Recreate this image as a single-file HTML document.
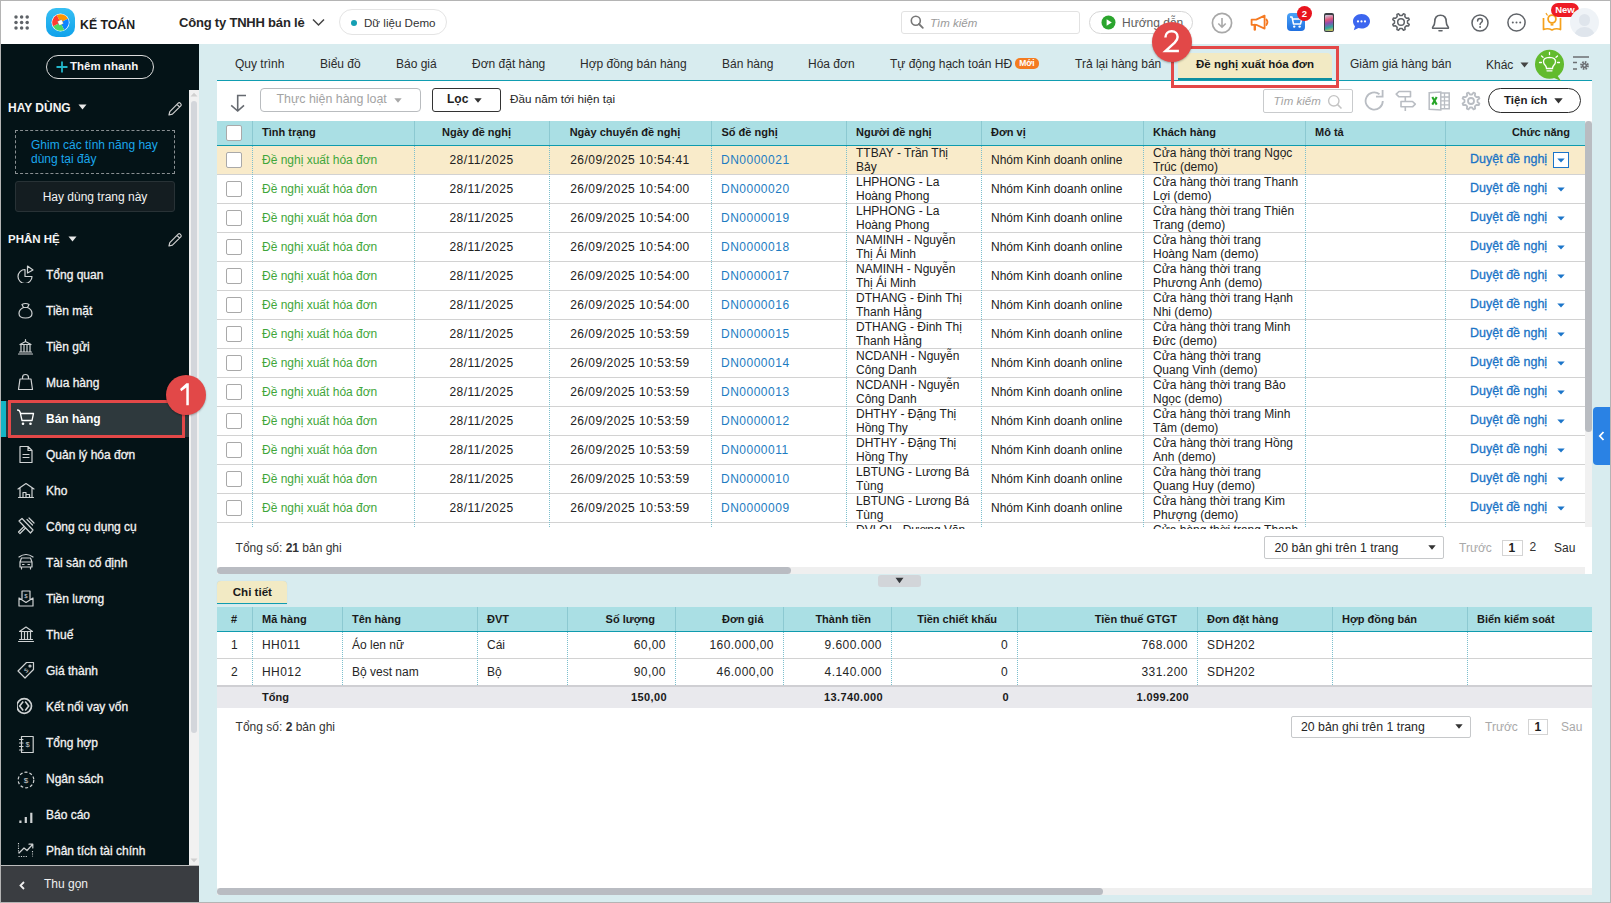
<!DOCTYPE html>
<html><head><meta charset="utf-8"><title>Kế toán</title>
<style>
*{box-sizing:border-box;margin:0;padding:0}
html,body{width:1611px;height:903px;overflow:hidden;background:#fff}
body{font-family:"Liberation Sans",sans-serif;font-size:12px;color:#212121;position:relative}
.abs{position:absolute}
#frame{position:absolute;left:0;top:0;width:1611px;height:903px;border-top:1px solid #b4b4b4;border-left:1px solid #b4b4b4;border-right:1px solid #b4b4b4;border-bottom:1px solid #b4b4b4;z-index:100;pointer-events:none}
/* header */
#hdr{position:absolute;left:0;top:0;width:1611px;height:44px;background:#fff}
/* sidebar */
#side{position:absolute;left:0;top:44px;width:199px;height:859px;background:#041317}
/* main */
#main{position:absolute;left:199px;top:44px;width:1412px;height:859px;background:#d8ecef}
.tab{position:absolute;top:12px;font-size:12px;color:#2a2a2a;white-space:nowrap}
#panel{position:absolute;left:217px;top:80px;width:1375px;height:494px;background:#fff;border-top:1px solid #119db1}
.mrow{position:absolute;left:0px;width:1368px;height:29px;border-bottom:1px solid #d2d2d2;background:#fff}
.mrow.hl{background:#f9ebca}
.mrow .c{position:absolute;top:0;height:28px;line-height:28px;white-space:nowrap}
.num{letter-spacing:0.5px}
.mrow .c2{position:absolute;top:-0.5px;line-height:14px;white-space:nowrap}
.cb{position:absolute;top:6px;width:16px;height:16px;border:1px solid #a9a9a9;border-radius:2px;background:#fff}
.st{color:#3fa63a}
.lnk{color:#1d7cc2}
.act{color:#1b74c6;font-weight:normal;font-size:12.5px;-webkit-text-stroke:0.3px #1b74c6;margin-top:-1px}
.tri{position:absolute;top:12px;width:8px;height:5px}
.vdot{position:absolute;z-index:5;width:1px;background-image:linear-gradient(#7dbfcd 50%,transparent 50%);background-size:1px 2px}
.th{position:absolute;top:0;height:24px;line-height:24px;font-weight:bold;color:#1a1a1a;white-space:nowrap}

.ddbox{position:absolute;left:1336px;top:6px;width:16px;height:16px;border:1.5px solid #1b75c9;background:#fff}
.tri{z-index:2}

</style></head><body>
<div id="hdr">
  <!-- grid dots -->
  <svg class="abs" style="left:14px;top:15px" width="16" height="15" viewBox="0 0 16 15">
    <g fill="#5f6368">
      <circle cx="2" cy="2" r="1.75"/><circle cx="7.6" cy="2" r="1.75"/><circle cx="13.2" cy="2" r="1.75"/>
      <circle cx="2" cy="7.5" r="1.75"/><circle cx="7.6" cy="7.5" r="1.75"/><circle cx="13.2" cy="7.5" r="1.75"/>
      <circle cx="2" cy="13" r="1.75"/><circle cx="7.6" cy="13" r="1.75"/><circle cx="13.2" cy="13" r="1.75"/>
    </g>
  </svg>
  <!-- logo -->
  <div class="abs" style="left:46px;top:8px;width:29px;height:29px;border-radius:10px;background:linear-gradient(#37bff3,#0fa2eb)"></div>
  <svg class="abs" style="left:51px;top:13px" width="19" height="19" viewBox="0 0 19 19">
    <circle cx="9.5" cy="9.5" r="9" fill="#fff"/>
    <g transform="rotate(-26.6 9.5 9.5)">
      <path d="M9.5 9.5 L9.5 1.2 A8.3 8.3 0 0 1 17.8 9.5 Z" fill="#ff9500"/>
      <path d="M9.5 9.5 L17.8 9.5 A8.3 8.3 0 0 1 9.5 17.8 Z" fill="#0a84ff"/>
      <path d="M9.5 9.5 L9.5 17.8 A8.3 8.3 0 0 1 1.2 9.5 Z" fill="#4cd964"/>
      <path d="M9.5 9.5 L1.2 9.5 A8.3 8.3 0 0 1 9.5 1.2 Z" fill="#ff3b30"/>
      <rect x="7.2" y="7.2" width="4.6" height="4.6" fill="#fff" stroke="#5f6368" stroke-width="0.3"/>
    </g>
  </svg>
  <div class="abs" style="left:80px;top:16.5px;font-size:12.3px;font-weight:bold;color:#1d1d1d;line-height:16px;white-space:nowrap">KẾ TOÁN</div>
  <div class="abs" style="left:179px;top:15px;font-size:13px;font-weight:bold;color:#262626;line-height:16px;white-space:nowrap;letter-spacing:-0.2px">Công ty TNHH bán lẻ</div>
  <svg class="abs" style="left:312px;top:18px" width="13" height="9" viewBox="0 0 13 9"><path d="M1 1.5 L6.5 7 L12 1.5" fill="none" stroke="#444" stroke-width="1.5"/></svg>
  <div class="abs" style="left:339px;top:9px;width:108px;height:26px;border:1px solid #e4e4e4;border-radius:13px"></div>
  <div class="abs" style="left:351px;top:20px;width:6px;height:6px;border-radius:3px;background:#159fb3"></div>
  <div class="abs" style="left:364px;top:15px;font-size:11.6px;color:#333;line-height:16px;white-space:nowrap">Dữ liệu Demo</div>
  <!-- search -->
  <div class="abs" style="left:901px;top:11px;width:179px;height:23px;border:1px solid #e2e2e2;border-radius:3px"></div>
  <svg class="abs" style="left:910px;top:15px" width="14" height="14" viewBox="0 0 14 14"><circle cx="5.8" cy="5.8" r="4.5" fill="none" stroke="#777" stroke-width="1.6"/><path d="M9 9 L12.8 12.8" stroke="#777" stroke-width="1.8" stroke-linecap="round"/></svg>
  <div class="abs" style="left:930px;top:15px;font-size:11.5px;font-style:italic;color:#9a9a9a;line-height:16px;white-space:nowrap">Tìm kiếm</div>
  <!-- huong dan -->
  <div class="abs" style="left:1089px;top:11px;width:104px;height:23px;border:1px solid #d6d6d6;border-radius:12px"></div>
  <svg class="abs" style="left:1101px;top:15px" width="15" height="15" viewBox="0 0 15 15"><circle cx="7.5" cy="7.5" r="7" fill="#2ba52e"/><path d="M5.6 4.2 L10.8 7.5 L5.6 10.8 Z" fill="#fff"/></svg>
  <div class="abs" style="left:1122px;top:15px;font-size:12px;color:#5e5e5e;line-height:16px;white-space:nowrap">Hướng dẫn</div>
  <!-- download -->
  <svg class="abs" style="left:1211px;top:12px" width="22" height="22" viewBox="0 0 22 22"><circle cx="11" cy="11" r="9.6" fill="none" stroke="#a8a8a8" stroke-width="1.7"/><path d="M11 6 V15 M7.3 11.5 L11 15.2 L14.7 11.5" fill="none" stroke="#a8a8a8" stroke-width="1.6"/></svg>
  <!-- megaphone -->
  <svg class="abs" style="left:1250px;top:14px" width="20" height="17" viewBox="0 0 20 17"><path d="M1.6 5.6 H6.2 L14.6 1.6 V14.6 L6.2 10.8 H1.6 Z" fill="none" stroke="#f57a22" stroke-width="1.8" stroke-linejoin="round"/><path d="M4.8 11 V15.6" stroke="#f57a22" stroke-width="2.4" stroke-linecap="round"/><path d="M16.4 5.4 Q18.6 8.2 16.4 11" fill="none" stroke="#f57a22" stroke-width="1.7" stroke-linecap="round"/></svg>
  <!-- cart -->
  <div class="abs" style="left:1287px;top:13px;width:18px;height:18px;border-radius:4px;background:linear-gradient(#4aa3f7,#1f6fe0)"></div>
  <svg class="abs" style="left:1289px;top:15px" width="14" height="14" viewBox="0 0 14 14"><path d="M1 2 H3 L4.5 9 H11.5 L12.8 4 H3.6" fill="none" stroke="#fff" stroke-width="1.5" stroke-linejoin="round"/><circle cx="5.2" cy="11.6" r="1.2" fill="#fff"/><circle cx="10.6" cy="11.6" r="1.2" fill="#fff"/></svg>
  <div class="abs" style="left:1297px;top:6px;width:15px;height:15px;border-radius:8px;background:#e8141e;color:#fff;font-size:9.5px;font-weight:bold;text-align:center;line-height:15px">2</div>
  <!-- phone -->
  <div class="abs" style="left:1324px;top:13px;width:10px;height:19px;border-radius:2px;background:#3b3f44"></div>
  <div class="abs" style="left:1325px;top:14.5px;width:8px;height:16px;border-radius:1px;background:linear-gradient(165deg,#c9d2e6 0%,#e0577a 30%,#8a4fb0 50%,#2fa7a0 75%,#e7c64d 100%)"></div>
  <!-- chat -->
  <svg class="abs" style="left:1352px;top:13px" width="19" height="18" viewBox="0 0 19 18"><path d="M9.5 1 C14.5 1 18 4.3 18 8.3 C18 12.3 14.5 15.6 9.5 15.6 C8.4 15.6 7.4 15.4 6.5 15.1 L1.8 17.2 L3 13.3 C1.8 12 1 10.2 1 8.3 C1 4.3 4.5 1 9.5 1 Z" fill="#3c66ef"/><circle cx="6" cy="8.4" r="1.1" fill="#fff"/><circle cx="9.5" cy="8.4" r="1.1" fill="#fff"/><circle cx="13" cy="8.4" r="1.1" fill="#fff"/></svg>
  <!-- gear -->
  <svg class="abs" style="left:1391px;top:12px" width="20" height="20" viewBox="0 0 20 20"><path d="M16.51 11.10 L18.24 12.46 L17.57 14.08 L15.38 13.82 L13.82 15.38 L14.08 17.57 L12.46 18.24 L11.10 16.51 L8.90 16.51 L7.54 18.24 L5.92 17.57 L6.18 15.38 L4.62 13.82 L2.43 14.08 L1.76 12.46 L3.49 11.10 L3.49 8.90 L1.76 7.54 L2.43 5.92 L4.62 6.18 L6.18 4.62 L5.92 2.43 L7.54 1.76 L8.90 3.49 L11.10 3.49 L12.46 1.76 L14.08 2.43 L13.82 4.62 L15.38 6.18 L17.57 5.92 L18.24 7.54 L16.51 8.90 Z" fill="none" stroke="#5f6368" stroke-width="1.5" stroke-linejoin="round"/><circle cx="10" cy="10" r="3.3" fill="none" stroke="#5f6368" stroke-width="1.5"/></svg>
  <!-- bell -->
  <svg class="abs" style="left:1431px;top:13px" width="19" height="19" viewBox="0 0 19 19"><path d="M2.2 15.2 Q1.2 15.2 1.8 14 Q3.8 12 3.8 8.6 Q3.8 2.2 9.5 2.2 Q15.2 2.2 15.2 8.6 Q15.2 12 17.2 14 Q17.8 15.2 16.8 15.2 Z" fill="none" stroke="#5f6368" stroke-width="1.6" stroke-linejoin="round"/><path d="M8 17.8 H11" stroke="#5f6368" stroke-width="1.6" stroke-linecap="round"/></svg>
  <!-- question -->
  <svg class="abs" style="left:1471px;top:14px" width="18" height="18" viewBox="0 0 18 18"><circle cx="9" cy="9" r="8" fill="none" stroke="#5f6368" stroke-width="1.5"/><path d="M6.6 6.9 C6.6 5.4 7.7 4.5 9 4.5 C10.3 4.5 11.4 5.4 11.4 6.7 C11.4 8.4 9.1 8.6 9.1 10.4" fill="none" stroke="#5f6368" stroke-width="1.5" stroke-linecap="round"/><circle cx="9.1" cy="13" r="0.95" fill="#5f6368"/></svg>
  <!-- ellipsis -->
  <svg class="abs" style="left:1507px;top:13px" width="19" height="19" viewBox="0 0 19 19"><circle cx="9.5" cy="9.5" r="8.6" fill="none" stroke="#5f6368" stroke-width="1.5"/><circle cx="5.8" cy="9.5" r="1" fill="#5f6368"/><circle cx="9.5" cy="9.5" r="1" fill="#5f6368"/><circle cx="13.2" cy="9.5" r="1" fill="#5f6368"/></svg>
  <!-- book bulb -->
  <svg class="abs" style="left:1542px;top:12px" width="20" height="20" viewBox="0 0 20 20"><path d="M1.5 6 V17.5 Q6 15.8 10 18 Q14 15.8 18.5 17.5 V6" fill="none" stroke="#f5a11c" stroke-width="1.7" stroke-linejoin="round"/><circle cx="10" cy="7" r="3.9" fill="none" stroke="#f5a11c" stroke-width="1.8"/><path d="M8.6 11.5 H11.4 V13.6 H8.6 Z" fill="#f5a11c"/><path d="M4.2 1.5 L5.2 3" stroke="#f5a11c" stroke-width="1.3" stroke-linecap="round"/></svg>
  <div class="abs" style="left:1551px;top:3px;width:28px;height:14px;border-radius:7px;background:#ee1c25;color:#fff;font-size:9.5px;font-weight:bold;text-align:center;line-height:14px">New</div>
  <!-- avatar -->
  <div class="abs" style="left:1570px;top:8px;width:29px;height:29px;border-radius:15px;background:#eff3f7;overflow:hidden">
    <div class="abs" style="left:9px;top:6px;width:11px;height:12px;border-radius:6px;background:#dfe5ec"></div>
    <div class="abs" style="left:4px;top:19px;width:21px;height:16px;border-radius:10px 10px 0 0;background:#dfe5ec"></div>
  </div>
</div>

<div id="side">
<div class="abs" style="left:46px;top:11px;width:108px;height:24px;border:1px solid #dcdcdc;border-radius:12px"></div>
<svg class="abs" style="left:56px;top:17px" width="12" height="12" viewBox="0 0 12 12"><path d="M6 0.5 V11.5 M0.5 6 H11.5" stroke="#22b6c9" stroke-width="1.8"/></svg><div class="abs" style="left:70px;top:14px;font-size:11.5px;font-weight:bold;color:#f4f4f4;line-height:16px;white-space:nowrap">Thêm nhanh</div>
<div class="abs" style="left:189px;top:46px;width:10px;height:776px;background:#f1f1f1"></div>
<div class="abs" style="left:191px;top:57px;width:6px;height:632px;background:#d3d6db;border-radius:3px"></div>
<svg class="abs" style="left:190px;top:48px" width="8" height="5" viewBox="0 0 8 5"><path d="M0.5 4.5 L4 0.8 L7.5 4.5 Z" fill="#d0d0d0"/></svg>
<svg class="abs" style="left:190px;top:814px" width="8" height="5" viewBox="0 0 8 5"><path d="M0.5 0.5 L4 4.2 L7.5 0.5 Z" fill="#d0d0d0"/></svg>
<div class="abs" style="left:8px;top:55.8px;font-size:12px;font-weight:bold;color:#f4f4f4;line-height:16px;white-space:nowrap">HAY DÙNG</div>
<svg class="abs" style="left:78px;top:60px" width="9" height="6" viewBox="0 0 9 6"><path d="M0.5 0.5 H8.5 L4.5 5.5 Z" fill="#e8e8e8"/></svg>
<svg class="abs" style="left:167px;top:57px" width="16" height="16" viewBox="0 0 16 16"><path d="M2 14 L2.8 10.6 L11.2 2.2 Q12.2 1.2 13.2 2.2 L13.8 2.8 Q14.8 3.8 13.8 4.8 L5.4 13.2 Z M10 3.4 L12.6 6" fill="none" stroke="#cfcfcf" stroke-width="1.2" stroke-linejoin="round"/></svg>
<div class="abs" style="left:15px;top:86px;width:160px;height:44px;border:1px dashed #8a8f92"></div>
<div class="abs" style="left:31px;top:94px;font-size:12px;color:#1aa7ec;line-height:14.3px;white-space:nowrap">Ghim các tính năng hay<br>dùng tại đây</div>
<div class="abs" style="left:15px;top:137px;width:160px;height:31px;background:#141d21;border:1px solid #283236;border-radius:3px;color:#f2f2f2;font-size:12px;line-height:31px;text-align:center;white-space:nowrap">Hay dùng trang này</div>
<div class="abs" style="left:8px;top:186.6px;font-size:11.5px;font-weight:bold;color:#f4f4f4;line-height:16px;white-space:nowrap">PHÂN HỆ</div>
<svg class="abs" style="left:68px;top:192px" width="9" height="6" viewBox="0 0 9 6"><path d="M0.5 0.5 H8.5 L4.5 5.5 Z" fill="#e8e8e8"/></svg>
<svg class="abs" style="left:167px;top:188px" width="16" height="16" viewBox="0 0 16 16"><path d="M2 14 L2.8 10.6 L11.2 2.2 Q12.2 1.2 13.2 2.2 L13.8 2.8 Q14.8 3.8 13.8 4.8 L5.4 13.2 Z M10 3.4 L12.6 6" fill="none" stroke="#cfcfcf" stroke-width="1.2" stroke-linejoin="round"/></svg>
<div class="abs" style="left:1px;top:357px;width:5px;height:36px;background:#15b5c6"></div>
<div class="abs" style="left:6px;top:357px;width:183px;height:36px;background:#2e393d"></div>
<svg class="abs" style="left:17px;top:221.2px" width="18" height="18" viewBox="0 0 18 18"><path d="M8 4.5 A7 7 0 1 0 15 11.5 H8 Z" fill="none" stroke="#cfd2d3" stroke-width="1.2" stroke-linejoin="round" stroke-linecap="round"/><path d="M10.5 1 L16 5 L10.5 8 Z" fill="none" stroke="#cfd2d3" stroke-width="1.2" stroke-linejoin="round" stroke-linecap="round"/></svg>
<div class="abs" style="left:46px;top:222.5px;font-size:12px;line-height:16px;white-space:nowrap;color:#f2f2f2;-webkit-text-stroke:0.3px #f2f2f2">Tổng quan</div>
<svg class="abs" style="left:17px;top:257.2px" width="18" height="18" viewBox="0 0 18 18"><path d="M5 3.5 Q8.5 1.5 12 3.5 L10.5 6.5 Q15 8.5 15 12.5 Q15 17 8.5 17 Q2 17 2 12.5 Q2 8.5 6.5 6.5 Z" fill="none" stroke="#cfd2d3" stroke-width="1.2" stroke-linejoin="round" stroke-linecap="round"/><path d="M6.5 6.5 H10.5" fill="none" stroke="#cfd2d3" stroke-width="1.2" stroke-linejoin="round" stroke-linecap="round"/></svg>
<div class="abs" style="left:46px;top:258.5px;font-size:12px;line-height:16px;white-space:nowrap;color:#f2f2f2;-webkit-text-stroke:0.3px #f2f2f2">Tiền mặt</div>
<svg class="abs" style="left:17px;top:293.2px" width="18" height="18" viewBox="0 0 18 18"><path d="M1.5 17 H15.5 M2.5 15 H14.5 M3 7.5 H14 M4 8 V14.5 M7 8 V14.5 M10 8 V14.5 M13 8 V14.5 M3 7.5 L8.5 4.5 L14 7.5 M8.5 2.5 V4" fill="none" stroke="#cfd2d3" stroke-width="1.2" stroke-linejoin="round" stroke-linecap="round"/></svg>
<div class="abs" style="left:46px;top:294.5px;font-size:12px;line-height:16px;white-space:nowrap;color:#f2f2f2;-webkit-text-stroke:0.3px #f2f2f2">Tiền gửi</div>
<svg class="abs" style="left:17px;top:329.2px" width="18" height="18" viewBox="0 0 18 18"><path d="M3 6 H14 L15.5 16.5 H1.5 Z M5.5 6 V4.5 Q5.5 1.5 8.5 1.5 Q11.5 1.5 11.5 4.5 V6" fill="none" stroke="#cfd2d3" stroke-width="1.2" stroke-linejoin="round" stroke-linecap="round"/></svg>
<div class="abs" style="left:46px;top:330.5px;font-size:12px;line-height:16px;white-space:nowrap;color:#f2f2f2;-webkit-text-stroke:0.3px #f2f2f2">Mua hàng</div>
<svg class="abs" style="left:17px;top:365.2px" width="18" height="18" viewBox="0 0 18 18"><path d="M0.5 1 Q2.5 1 3.2 3.5 L5 11.5 H15 L16.5 4.5 H4" fill="none" stroke="#fff" stroke-width="1.3" stroke-linejoin="round" stroke-linecap="round"/><circle cx="6" cy="14.8" r="1.3" fill="#fff"/><circle cx="13.5" cy="14.8" r="1.3" fill="#fff"/></svg>
<div class="abs" style="left:46px;top:366.5px;font-size:12px;line-height:16px;white-space:nowrap;font-weight:bold;color:#fff">Bán hàng</div>
<svg class="abs" style="left:17px;top:401.2px" width="18" height="18" viewBox="0 0 18 18"><path d="M3 1.5 H11 L15 5.5 V17.5 H3 Z M11 1.5 V5.5 H15 M6 9.5 H12 M6 12.5 H12" fill="none" stroke="#cfd2d3" stroke-width="1.2" stroke-linejoin="round" stroke-linecap="round"/></svg>
<div class="abs" style="left:46px;top:402.5px;font-size:12px;line-height:16px;white-space:nowrap;color:#f2f2f2;-webkit-text-stroke:0.3px #f2f2f2">Quản lý hóa đơn</div>
<svg class="abs" style="left:17px;top:437.2px" width="18" height="18" viewBox="0 0 18 18"><path d="M1 8 L9 2.5 L17 8 M3 7 V16.5 M15 7 V16.5 M1.5 16.5 H16.5 M6 16.5 V11.5 H9 V16.5 M9 13.5 H12.5 V16.5" fill="none" stroke="#cfd2d3" stroke-width="1.2" stroke-linejoin="round" stroke-linecap="round"/></svg>
<div class="abs" style="left:46px;top:438.5px;font-size:12px;line-height:16px;white-space:nowrap;color:#f2f2f2;-webkit-text-stroke:0.3px #f2f2f2">Kho</div>
<svg class="abs" style="left:17px;top:473.2px" width="18" height="18" viewBox="0 0 18 18"><path d="M2 4 L5 1.5 L16 13 L13.5 16 Z M10 2.5 L15.5 8 M12 1 L17 6 M8.5 11 L3 16.5 L1.5 15 L7 9.5" fill="none" stroke="#cfd2d3" stroke-width="1.2" stroke-linejoin="round" stroke-linecap="round"/></svg>
<div class="abs" style="left:46px;top:474.5px;font-size:12px;line-height:16px;white-space:nowrap;color:#f2f2f2;-webkit-text-stroke:0.3px #f2f2f2">Công cụ dụng cụ</div>
<svg class="abs" style="left:17px;top:509.2px" width="18" height="18" viewBox="0 0 18 18"><path d="M3 9 L4.5 5 H13.5 L15 9 V14 H3 Z M3 9 H15 M4.5 14 V16 M13.5 14 V16 M5.5 11.5 H7 M11 11.5 H12.5 M2 4 Q9 -1 16 4" fill="none" stroke="#cfd2d3" stroke-width="1.2" stroke-linejoin="round" stroke-linecap="round"/></svg>
<div class="abs" style="left:46px;top:510.5px;font-size:12px;line-height:16px;white-space:nowrap;color:#f2f2f2;-webkit-text-stroke:0.3px #f2f2f2">Tài sản cố định</div>
<svg class="abs" style="left:17px;top:545.2px" width="18" height="18" viewBox="0 0 18 18"><path d="M2 9 V17 H16 V9 M2 9 L9 13.5 L16 9 M5 11 V2 H13 V11" fill="none" stroke="#cfd2d3" stroke-width="1.2" stroke-linejoin="round" stroke-linecap="round"/><text x="9" y="8.5" font-size="6" fill="#cfd2d3" text-anchor="middle" font-family="Liberation Sans">$</text></svg>
<div class="abs" style="left:46px;top:546.5px;font-size:12px;line-height:16px;white-space:nowrap;color:#f2f2f2;-webkit-text-stroke:0.3px #f2f2f2">Tiền lương</div>
<svg class="abs" style="left:17px;top:581.2px" width="18" height="18" viewBox="0 0 18 18"><path d="M1.5 16.5 H16.5 M2.5 14.5 H15.5 M2.5 6.5 H15.5 L9 2 Z M4.5 7 V14 M7.5 7 V14 M10.5 7 V14 M13.5 7 V14" fill="none" stroke="#cfd2d3" stroke-width="1.2" stroke-linejoin="round" stroke-linecap="round"/></svg>
<div class="abs" style="left:46px;top:582.5px;font-size:12px;line-height:16px;white-space:nowrap;color:#f2f2f2;-webkit-text-stroke:0.3px #f2f2f2">Thuế</div>
<svg class="abs" style="left:17px;top:617.2px" width="18" height="18" viewBox="0 0 18 18"><path d="M9.5 1.5 H16.5 V8.5 L8 17 L1 10 Z" fill="none" stroke="#cfd2d3" stroke-width="1.2" stroke-linejoin="round" stroke-linecap="round"/><circle cx="13" cy="5" r="1" fill="none" stroke="#cfd2d3" stroke-width="1.2" stroke-linejoin="round" stroke-linecap="round"/><text x="9" y="11.5" font-size="6" fill="#cfd2d3" text-anchor="middle" font-family="Liberation Sans" transform="rotate(-45 9 9)">$</text></svg>
<div class="abs" style="left:46px;top:618.5px;font-size:12px;line-height:16px;white-space:nowrap;color:#f2f2f2;-webkit-text-stroke:0.3px #f2f2f2">Giá thành</div>
<svg class="abs" style="left:17px;top:653.2px" width="18" height="18" viewBox="0 0 18 18"><circle cx="7.2" cy="9" r="7.3" fill="none" stroke="#cfd2d3" stroke-width="1.7"/><path d="M6.2 4.5 L2.7 9 L6.2 13.5 M8.2 4.5 L11.7 9 L8.2 13.5" fill="none" stroke="#cfd2d3" stroke-width="1.6"/></svg>
<div class="abs" style="left:46px;top:654.5px;font-size:12px;line-height:16px;white-space:nowrap;color:#f2f2f2;-webkit-text-stroke:0.3px #f2f2f2">Kết nối vay vốn</div>
<svg class="abs" style="left:17px;top:690.7px" width="18" height="18" viewBox="0 0 18 18"><path d="M4.5 1.5 H16.2 V17.5 H4.5 Z M2.5 4.5 H6 M2.5 8 H6 M2.5 11.5 H6 M2.5 15 H6" fill="none" stroke="#cfd2d3" stroke-width="1.2" stroke-linejoin="round" stroke-linecap="round"/><text x="10.5" y="12.2" font-size="7.5" fill="#cfd2d3" text-anchor="middle" font-family="Liberation Sans">$</text></svg>
<div class="abs" style="left:46px;top:690.5px;font-size:12px;line-height:16px;white-space:nowrap;color:#f2f2f2;-webkit-text-stroke:0.3px #f2f2f2">Tổng hợp</div>
<svg class="abs" style="left:17px;top:727.2px" width="18" height="18" viewBox="0 0 18 18"><circle cx="9" cy="9" r="7.8" fill="none" stroke="#cfd2d3" stroke-width="1.2" stroke-dasharray="3 2"/><text x="9" y="12" font-size="8" fill="#cfd2d3" text-anchor="middle" font-family="Liberation Sans">$</text></svg>
<div class="abs" style="left:46px;top:726.5px;font-size:12px;line-height:16px;white-space:nowrap;color:#f2f2f2;-webkit-text-stroke:0.3px #f2f2f2">Ngân sách</div>
<svg class="abs" style="left:17px;top:761.2px" width="18" height="18" viewBox="0 0 18 18"><path d="M3.4 17.9 V15.5 M8.8 17.9 V12 M14.3 17.9 V7.8" fill="none" stroke="#cfd2d3" stroke-width="2.2"/></svg>
<div class="abs" style="left:46px;top:762.5px;font-size:12px;line-height:16px;white-space:nowrap;color:#f2f2f2;-webkit-text-stroke:0.3px #f2f2f2">Báo cáo</div>
<svg class="abs" style="left:17px;top:797.2px" width="18" height="18" viewBox="0 0 18 18"><path d="M2 12 L7 7 L10 9.5 L15.5 3.5 M12 3.2 H15.8 V7" fill="none" stroke="#cfd2d3" stroke-width="1.2" stroke-linejoin="round" stroke-linecap="round"/><path d="M1.5 2 V12 M1.5 15.5 H11 M15.5 10 V15.5" fill="none" stroke="#cfd2d3" stroke-width="1.1" stroke-dasharray="1.2 1.2"/></svg>
<div class="abs" style="left:46px;top:798.5px;font-size:12px;line-height:16px;white-space:nowrap;color:#f2f2f2;-webkit-text-stroke:0.3px #f2f2f2">Phân tích tài chính</div>
<div class="abs" style="left:0px;top:821px;width:199px;height:1px;background:#bdbdbd"></div>
<div class="abs" style="left:0px;top:822px;width:199px;height:37px;background:#3a3d41"></div>
<svg class="abs" style="left:19px;top:837px" width="6" height="9" viewBox="0 0 6 9"><path d="M5 1 L1.5 4.5 L5 8" fill="none" stroke="#f0f0f0" stroke-width="1.8"/></svg>
<div class="abs" style="left:44px;top:831.8px;font-size:12px;color:#f0f0f0;line-height:16px;white-space:nowrap">Thu gọn</div>
</div>

<div id="main"></div>
<div id="panel"></div>
<div class="abs" style="left:1486px;top:57.44px;font-size:12px;font-weight:400;color:#2b2b2b;line-height:16px;white-space:nowrap;">Khác</div>
<div class="abs" style="left:235px;top:56.24px;font-size:12px;font-weight:400;color:#2b2b2b;line-height:16px;white-space:nowrap;">Quy trình</div>
<div class="abs" style="left:320px;top:56.24px;font-size:12px;font-weight:400;color:#2b2b2b;line-height:16px;white-space:nowrap;">Biểu đồ</div>
<div class="abs" style="left:396px;top:56.24px;font-size:12px;font-weight:400;color:#2b2b2b;line-height:16px;white-space:nowrap;">Báo giá</div>
<div class="abs" style="left:472px;top:56.24px;font-size:12px;font-weight:400;color:#2b2b2b;line-height:16px;white-space:nowrap;">Đơn đặt hàng</div>
<div class="abs" style="left:580px;top:56.24px;font-size:12px;font-weight:400;color:#2b2b2b;line-height:16px;white-space:nowrap;">Hợp đồng bán hàng</div>
<div class="abs" style="left:722px;top:56.24px;font-size:12px;font-weight:400;color:#2b2b2b;line-height:16px;white-space:nowrap;">Bán hàng</div>
<div class="abs" style="left:808px;top:56.24px;font-size:12px;font-weight:400;color:#2b2b2b;line-height:16px;white-space:nowrap;">Hóa đơn</div>
<div class="abs" style="left:890px;top:56.24px;font-size:12px;font-weight:400;color:#2b2b2b;line-height:16px;white-space:nowrap;">Tự động hạch toán HĐ</div>
<div class="abs" style="left:1075px;top:56.24px;font-size:12px;font-weight:400;color:#2b2b2b;line-height:16px;white-space:nowrap;">Trả lại hàng bán</div>
<div class="abs" style="left:1350px;top:56.24px;font-size:12px;font-weight:400;color:#2b2b2b;line-height:16px;white-space:nowrap;">Giảm giá hàng bán</div>
<div class="abs" style="left:1015px;top:58px;width:24px;height:11px;border-radius:5px;background:#f47b20;color:#fff;font-size:8.5px;font-weight:bold;line-height:11px;text-align:center">Mới</div>
<svg class="abs" style="left:1520px;top:62px" width="9" height="6" viewBox="0 0 9 6"><path d="M0.5 0.5 H8.5 L4.5 5.5 Z" fill="#444"/></svg>
<div class="abs" style="left:1178px;top:53px;width:154px;height:27px;background:#f2eac4;border-radius:5px 5px 0 0;border-bottom:2px solid #0e8fa1"></div>
<div class="abs" style="left:1196px;top:56.02px;font-size:11.5px;font-weight:700;color:#1a1a1a;line-height:16px;white-space:nowrap;">Đề nghị xuất hóa đơn</div>
<svg class="abs" style="left:1533px;top:48px" width="34" height="36" viewBox="0 0 34 36"><path d="M24 27 L28 33 L20 29.5 Z" fill="#5fb82b"/><circle cx="16.5" cy="16.3" r="14.5" fill="#62bb2e"/><g fill="none" stroke="#fff" stroke-width="1.3" stroke-linecap="round"><path d="M13.5 20.5 Q13.5 18.5 12 17 Q10.5 15.5 10.5 13.5 Q10.5 9.5 16.5 9.3 Q22.5 9.5 22.5 13.5 Q22.5 15.5 21 17 Q19.5 18.5 19.5 20.5 Z"/><path d="M14 22.8 H19"/><path d="M16.5 4.5 V6.5 M8.5 8 L10 9.3 M24.5 8 L23 9.3 M6.5 14.5 H8.5 M24.5 14.5 H26.5"/></g></svg>
<svg class="abs" style="left:1572px;top:56px" width="18" height="16" viewBox="0 0 18 16"><path d="M1 1 H17 M1 6.5 H5 M1 13 H5" stroke="#6c6f73" stroke-width="1.4"/><circle cx="12.5" cy="9.5" r="3.2" fill="none" stroke="#6c6f73" stroke-width="2.4" stroke-dasharray="1.5 1"/><circle cx="12.5" cy="9.5" r="2.6" fill="#6c6f73"/><circle cx="12.5" cy="9.5" r="1" fill="#d8ecef"/></svg>
<svg class="abs" style="left:229px;top:93px" width="18" height="20" viewBox="0 0 18 20"><path d="M17 2.5 H8.7 V17.8 M2.2 12.3 L8.7 18 L15 12.3" fill="none" stroke="#666a70" stroke-width="1.6"/></svg>
<div class="abs" style="left:260px;top:88px;width:161px;height:24px;border:1.5px solid #b9bcbf;border-radius:4px"></div>
<div class="abs" style="left:276.5px;top:90.90px;font-size:12.4px;font-weight:400;color:#a3a3a3;line-height:16px;white-space:nowrap;">Thực hiện hàng loạt</div>
<svg class="abs" style="left:394px;top:98px" width="8" height="5" viewBox="0 0 8 5"><path d="M0.3 0.3 H7.7 L4 4.7 Z" fill="#a8a8a8"/></svg>
<div class="abs" style="left:432px;top:88px;width:69px;height:24px;border:1.2px solid #333;border-radius:3px"></div>
<div class="abs" style="left:447px;top:91.04px;font-size:12px;font-weight:700;color:#1e1e1e;line-height:16px;white-space:nowrap;">Lọc</div>
<svg class="abs" style="left:474px;top:98px" width="8" height="5" viewBox="0 0 8 5"><path d="M0.3 0.3 H7.7 L4 4.7 Z" fill="#333"/></svg>
<div class="abs" style="left:510px;top:91.15px;font-size:11.7px;font-weight:400;color:#262626;line-height:16px;white-space:nowrap;">Đầu năm tới hiện tại</div>
<div class="abs" style="left:1263px;top:89px;width:90px;height:24px;border:1px solid #c9cbcd;border-radius:2px"></div>
<div class="abs" style="left:1273.5px;top:93.02px;font-size:11.5px;font-weight:400;color:#a3a3a3;line-height:16px;white-space:nowrap;font-style:italic">Tìm kiếm</div>
<svg class="abs" style="left:1327px;top:94px" width="16" height="16" viewBox="0 0 16 16"><circle cx="6.8" cy="6.8" r="5.2" fill="none" stroke="#c4c4c4" stroke-width="1.4"/><path d="M10.6 10.6 L14.5 14.5" stroke="#c4c4c4" stroke-width="1.5"/></svg>
<svg class="abs" style="left:1364px;top:89px" width="22" height="24" viewBox="0 0 22 24"><path d="M18.8 12 A8.6 8.6 0 1 1 15.5 5.2" fill="none" stroke="#b9bdc3" stroke-width="1.8"/><path d="M18.6 1 V7.6 H12" fill="none" stroke="#b9bdc3" stroke-width="1.8"/></svg>
<svg class="abs" style="left:1395px;top:90px" width="22" height="22" viewBox="0 0 22 22"><path d="M4 1.5 H15.5 V6.8 H4 L1.2 4.15 Z M6 11.5 H17.5 L20.3 14.1 L17.5 16.8 H6 Z M10.3 6.8 V11.5 M10.3 16.8 V21" fill="none" stroke="#b9bdc3" stroke-width="1.6" stroke-linejoin="round"/></svg>
<svg class="abs" style="left:1428px;top:91px" width="23" height="20" viewBox="0 0 23 20"><path d="M12 2 H21.2 V17.8 H12" fill="none" stroke="#b9bdc3" stroke-width="1.5"/><path d="M16.5 2 V17.8 M12 6 H21.2 M12 9.8 H21.2 M12 13.8 H21.2" stroke="#b9bdc3" stroke-width="1.3"/><path d="M1.2 1.8 L12.8 1 V19 L1.2 18.2 Z" fill="#fff" stroke="#b9bdc3" stroke-width="1.5"/><path d="M4.3 6 L8.7 13.6 M8.7 6 L4.3 13.6" stroke="#27a527" stroke-width="2.1"/></svg>
<svg class="abs" style="left:1461px;top:91px" width="20" height="20" viewBox="0 0 20 20"><path d="M16.51 11.10 L18.43 12.52 L17.74 14.18 L15.38 13.82 L13.82 15.38 L14.18 17.74 L12.52 18.43 L11.10 16.51 L8.90 16.51 L7.48 18.43 L5.82 17.74 L6.18 15.38 L4.62 13.82 L2.26 14.18 L1.57 12.52 L3.49 11.10 L3.49 8.90 L1.57 7.48 L2.26 5.82 L4.62 6.18 L6.18 4.62 L5.82 2.26 L7.48 1.57 L8.90 3.49 L11.10 3.49 L12.52 1.57 L14.18 2.26 L13.82 4.62 L15.38 6.18 L17.74 5.82 L18.43 7.48 L16.51 8.90 Z" fill="none" stroke="#b9bdc3" stroke-width="1.8" stroke-linejoin="round"/><circle cx="10" cy="10" r="3" fill="none" stroke="#b9bdc3" stroke-width="1.8"/></svg>
<div class="abs" style="left:1488px;top:88px;width:93px;height:25px;border:1.3px solid #2b2b2b;border-radius:13px"></div>
<div class="abs" style="left:1504px;top:92.02px;font-size:11.5px;font-weight:700;color:#1e1e1e;line-height:16px;white-space:nowrap;">Tiện ích</div>
<svg class="abs" style="left:1554px;top:98px" width="9" height="6" viewBox="0 0 9 6"><path d="M0.3 0.3 H8.7 L4.5 5.5 Z" fill="#333"/></svg>
<div class="abs" style="left:217px;top:121px;width:1368px;height:25px;background:#aadfe4;border-bottom:1px solid #0f9bae"></div>
<div class="abs" style="left:252px;top:121px;width:1px;height:24px;background:#8cc9d1"></div>
<div class="abs" style="left:414px;top:121px;width:1px;height:24px;background:#8cc9d1"></div>
<div class="abs" style="left:549px;top:121px;width:1px;height:24px;background:#8cc9d1"></div>
<div class="abs" style="left:711px;top:121px;width:1px;height:24px;background:#8cc9d1"></div>
<div class="abs" style="left:846px;top:121px;width:1px;height:24px;background:#8cc9d1"></div>
<div class="abs" style="left:981px;top:121px;width:1px;height:24px;background:#8cc9d1"></div>
<div class="abs" style="left:1143px;top:121px;width:1px;height:24px;background:#8cc9d1"></div>
<div class="abs" style="left:1305px;top:121px;width:1px;height:24px;background:#8cc9d1"></div>
<div class="abs" style="left:1445px;top:121px;width:1px;height:24px;background:#8cc9d1"></div>
<div class="abs" style="left:226px;top:125px;width:16px;height:16px;border:1px solid #a9a9a9;border-radius:2px;background:#fff"></div>
<div class="abs" style="left:262px;top:124.19px;font-size:11px;font-weight:700;color:#1a1a1a;line-height:16px;white-space:nowrap;">Tình trạng</div>
<div class="abs" style="left:409px;width:135px;top:124.19px;text-align:center;font-size:11px;font-weight:700;color:#1a1a1a;line-height:16px;white-space:nowrap">Ngày đề nghị</div>
<div class="abs" style="left:544px;width:162px;top:124.19px;text-align:center;font-size:11px;font-weight:700;color:#1a1a1a;line-height:16px;white-space:nowrap">Ngày chuyển đề nghị</div>
<div class="abs" style="left:721.5px;top:124.19px;font-size:11px;font-weight:700;color:#1a1a1a;line-height:16px;white-space:nowrap;">Số đề nghị</div>
<div class="abs" style="left:856px;top:124.19px;font-size:11px;font-weight:700;color:#1a1a1a;line-height:16px;white-space:nowrap;">Người đề nghị</div>
<div class="abs" style="left:991px;top:124.19px;font-size:11px;font-weight:700;color:#1a1a1a;line-height:16px;white-space:nowrap;">Đơn vị</div>
<div class="abs" style="left:1153px;top:124.19px;font-size:11px;font-weight:700;color:#1a1a1a;line-height:16px;white-space:nowrap;">Khách hàng</div>
<div class="abs" style="left:1315px;top:124.19px;font-size:11px;font-weight:700;color:#1a1a1a;line-height:16px;white-space:nowrap;">Mô tả</div>
<div class="abs" style="left:1445px;width:125px;top:124.19px;text-align:right;font-size:11px;font-weight:700;color:#1a1a1a;line-height:16px;white-space:nowrap">Chức năng</div>
<div class="vdot" style="left:252px;top:146px;height:382px"></div>
<div class="vdot" style="left:414px;top:146px;height:382px"></div>
<div class="vdot" style="left:549px;top:146px;height:382px"></div>
<div class="vdot" style="left:711px;top:146px;height:382px"></div>
<div class="vdot" style="left:846px;top:146px;height:382px"></div>
<div class="vdot" style="left:981px;top:146px;height:382px"></div>
<div class="vdot" style="left:1143px;top:146px;height:382px"></div>
<div class="vdot" style="left:1305px;top:146px;height:382px"></div>
<div class="vdot" style="left:1445px;top:146px;height:382px"></div>
<div class="abs" style="left:1585px;top:121px;width:7px;height:406px;background:#f1f1f1"></div>
<div class="abs" style="left:1585px;top:121px;width:7px;height:311px;background:#b9bcc1;border-radius:4px"></div>
<div class="abs" style="left:235.6px;top:539.54px;font-size:12px;font-weight:400;color:#333;line-height:16px;white-space:nowrap;">Tổng số: <b>21</b> bản ghi</div>
<div class="abs" style="left:1264px;top:536px;width:180px;height:23px;border:1px solid #c6c8ca;border-radius:2px"></div>
<div class="abs" style="left:1274.5px;top:539.74px;font-size:12.3px;font-weight:400;color:#262626;line-height:16px;white-space:nowrap;">20 bản ghi trên 1 trang</div>
<svg class="abs" style="left:1428px;top:545px" width="8" height="5" viewBox="0 0 8 5"><path d="M0.3 0.3 H7.7 L4 4.7 Z" fill="#333"/></svg>
<div class="abs" style="left:1459px;top:539.84px;font-size:12px;font-weight:400;color:#a9a9a9;line-height:16px;white-space:nowrap;">Trước</div>
<div class="abs" style="left:1502px;top:540px;width:21px;height:16px;border:1px solid #d4d4d4;background:#fff"></div>
<div class="abs" style="left:1508.5px;top:539.84px;font-size:12px;font-weight:700;color:#222;line-height:16px;white-space:nowrap;">1</div>
<div class="abs" style="left:1529.5px;top:539.34px;font-size:12px;font-weight:400;color:#333;line-height:16px;white-space:nowrap;">2</div>
<div class="abs" style="left:1554px;top:539.84px;font-size:12px;font-weight:400;color:#2a2a2a;line-height:16px;white-space:nowrap;">Sau</div>
<div class="abs" style="left:217px;top:567px;width:1368px;height:7px;background:#efefef"></div>
<div class="abs" style="left:217px;top:567px;width:574px;height:7px;background:#b9bcc2;border-radius:4px"></div>
<div class="abs" style="left:1585px;top:567px;width:7px;height:7px;background:#fff"></div>
<div class="abs" style="left:878px;top:575px;width:43px;height:12px;background:#d2d5d9;border-radius:3px"></div>
<svg class="abs" style="left:895px;top:577px" width="9" height="7" viewBox="0 0 9 7"><path d="M0.5 0.8 H8.5 L4.5 6.2 Z" fill="#35383c"/></svg>
<div class="abs" style="left:1593px;top:407px;width:18px;height:58px;background:#2a82e4;border-radius:4px 0 0 4px"></div>
<svg class="abs" style="left:1598px;top:431px" width="7" height="10" viewBox="0 0 7 10"><path d="M5.5 1 L1.8 5 L5.5 9" fill="none" stroke="#fff" stroke-width="1.8"/></svg>

<div class="abs" style="left:217px;top:146px;width:1368px;height:383px;overflow:hidden"><div class="mrow hl" style="top:0px"><div class="cb" style="left:9px"></div><div class="c st" style="left:45px">Đề nghị xuất hóa đơn</div><div class="c num" style="left:197px;width:135px;text-align:center">28/11/2025</div><div class="c num" style="left:332px;width:162px;text-align:center">26/09/2025 10:54:41</div><div class="c lnk num" style="left:504px">DN0000021</div><div class="c2 nm" style="left:639px">TTBAY - Trần Thị<br>Bảy</div><div class="c" style="left:774px">Nhóm Kinh doanh online</div><div class="c2" style="left:936px">Cửa hàng thời trang Ngọc<br>Trúc (demo)</div><div class="c act" style="left:1253px">Duyệt đề nghị</div><span class="ddbox"></span><svg class="tri" style="left:1340px" width="8" height="5" viewBox="0 0 8 5"><path d="M0.3 0.5 H7.7 L4 4.6 Z" fill="#1b75c9"/></svg></div><div class="mrow" style="top:29px"><div class="cb" style="left:9px"></div><div class="c st" style="left:45px">Đề nghị xuất hóa đơn</div><div class="c num" style="left:197px;width:135px;text-align:center">28/11/2025</div><div class="c num" style="left:332px;width:162px;text-align:center">26/09/2025 10:54:00</div><div class="c lnk num" style="left:504px">DN0000020</div><div class="c2 nm" style="left:639px">LHPHONG - La<br>Hoàng Phong</div><div class="c" style="left:774px">Nhóm Kinh doanh online</div><div class="c2" style="left:936px">Cửa hàng thời trang Thanh<br>Lợi (demo)</div><div class="c act" style="left:1253px">Duyệt đề nghị</div><svg class="tri" style="left:1340px" width="8" height="5" viewBox="0 0 8 5"><path d="M0.3 0.5 H7.7 L4 4.6 Z" fill="#1b75c9"/></svg></div><div class="mrow" style="top:58px"><div class="cb" style="left:9px"></div><div class="c st" style="left:45px">Đề nghị xuất hóa đơn</div><div class="c num" style="left:197px;width:135px;text-align:center">28/11/2025</div><div class="c num" style="left:332px;width:162px;text-align:center">26/09/2025 10:54:00</div><div class="c lnk num" style="left:504px">DN0000019</div><div class="c2 nm" style="left:639px">LHPHONG - La<br>Hoàng Phong</div><div class="c" style="left:774px">Nhóm Kinh doanh online</div><div class="c2" style="left:936px">Cửa hàng thời trang Thiên<br>Trang (demo)</div><div class="c act" style="left:1253px">Duyệt đề nghị</div><svg class="tri" style="left:1340px" width="8" height="5" viewBox="0 0 8 5"><path d="M0.3 0.5 H7.7 L4 4.6 Z" fill="#1b75c9"/></svg></div><div class="mrow" style="top:87px"><div class="cb" style="left:9px"></div><div class="c st" style="left:45px">Đề nghị xuất hóa đơn</div><div class="c num" style="left:197px;width:135px;text-align:center">28/11/2025</div><div class="c num" style="left:332px;width:162px;text-align:center">26/09/2025 10:54:00</div><div class="c lnk num" style="left:504px">DN0000018</div><div class="c2 nm" style="left:639px">NAMINH - Nguyễn<br>Thị Ái Minh</div><div class="c" style="left:774px">Nhóm Kinh doanh online</div><div class="c2" style="left:936px">Cửa hàng thời trang<br>Hoàng Nam (demo)</div><div class="c act" style="left:1253px">Duyệt đề nghị</div><svg class="tri" style="left:1340px" width="8" height="5" viewBox="0 0 8 5"><path d="M0.3 0.5 H7.7 L4 4.6 Z" fill="#1b75c9"/></svg></div><div class="mrow" style="top:116px"><div class="cb" style="left:9px"></div><div class="c st" style="left:45px">Đề nghị xuất hóa đơn</div><div class="c num" style="left:197px;width:135px;text-align:center">28/11/2025</div><div class="c num" style="left:332px;width:162px;text-align:center">26/09/2025 10:54:00</div><div class="c lnk num" style="left:504px">DN0000017</div><div class="c2 nm" style="left:639px">NAMINH - Nguyễn<br>Thị Ái Minh</div><div class="c" style="left:774px">Nhóm Kinh doanh online</div><div class="c2" style="left:936px">Cửa hàng thời trang<br>Phương Anh (demo)</div><div class="c act" style="left:1253px">Duyệt đề nghị</div><svg class="tri" style="left:1340px" width="8" height="5" viewBox="0 0 8 5"><path d="M0.3 0.5 H7.7 L4 4.6 Z" fill="#1b75c9"/></svg></div><div class="mrow" style="top:145px"><div class="cb" style="left:9px"></div><div class="c st" style="left:45px">Đề nghị xuất hóa đơn</div><div class="c num" style="left:197px;width:135px;text-align:center">28/11/2025</div><div class="c num" style="left:332px;width:162px;text-align:center">26/09/2025 10:54:00</div><div class="c lnk num" style="left:504px">DN0000016</div><div class="c2 nm" style="left:639px">DTHANG - Đinh Thị<br>Thanh Hằng</div><div class="c" style="left:774px">Nhóm Kinh doanh online</div><div class="c2" style="left:936px">Cửa hàng thời trang Hạnh<br>Nhi (demo)</div><div class="c act" style="left:1253px">Duyệt đề nghị</div><svg class="tri" style="left:1340px" width="8" height="5" viewBox="0 0 8 5"><path d="M0.3 0.5 H7.7 L4 4.6 Z" fill="#1b75c9"/></svg></div><div class="mrow" style="top:174px"><div class="cb" style="left:9px"></div><div class="c st" style="left:45px">Đề nghị xuất hóa đơn</div><div class="c num" style="left:197px;width:135px;text-align:center">28/11/2025</div><div class="c num" style="left:332px;width:162px;text-align:center">26/09/2025 10:53:59</div><div class="c lnk num" style="left:504px">DN0000015</div><div class="c2 nm" style="left:639px">DTHANG - Đinh Thị<br>Thanh Hằng</div><div class="c" style="left:774px">Nhóm Kinh doanh online</div><div class="c2" style="left:936px">Cửa hàng thời trang Minh<br>Đức (demo)</div><div class="c act" style="left:1253px">Duyệt đề nghị</div><svg class="tri" style="left:1340px" width="8" height="5" viewBox="0 0 8 5"><path d="M0.3 0.5 H7.7 L4 4.6 Z" fill="#1b75c9"/></svg></div><div class="mrow" style="top:203px"><div class="cb" style="left:9px"></div><div class="c st" style="left:45px">Đề nghị xuất hóa đơn</div><div class="c num" style="left:197px;width:135px;text-align:center">28/11/2025</div><div class="c num" style="left:332px;width:162px;text-align:center">26/09/2025 10:53:59</div><div class="c lnk num" style="left:504px">DN0000014</div><div class="c2 nm" style="left:639px">NCDANH - Nguyễn<br>Công Danh</div><div class="c" style="left:774px">Nhóm Kinh doanh online</div><div class="c2" style="left:936px">Cửa hàng thời trang<br>Quang Vinh (demo)</div><div class="c act" style="left:1253px">Duyệt đề nghị</div><svg class="tri" style="left:1340px" width="8" height="5" viewBox="0 0 8 5"><path d="M0.3 0.5 H7.7 L4 4.6 Z" fill="#1b75c9"/></svg></div><div class="mrow" style="top:232px"><div class="cb" style="left:9px"></div><div class="c st" style="left:45px">Đề nghị xuất hóa đơn</div><div class="c num" style="left:197px;width:135px;text-align:center">28/11/2025</div><div class="c num" style="left:332px;width:162px;text-align:center">26/09/2025 10:53:59</div><div class="c lnk num" style="left:504px">DN0000013</div><div class="c2 nm" style="left:639px">NCDANH - Nguyễn<br>Công Danh</div><div class="c" style="left:774px">Nhóm Kinh doanh online</div><div class="c2" style="left:936px">Cửa hàng thời trang Bảo<br>Ngọc (demo)</div><div class="c act" style="left:1253px">Duyệt đề nghị</div><svg class="tri" style="left:1340px" width="8" height="5" viewBox="0 0 8 5"><path d="M0.3 0.5 H7.7 L4 4.6 Z" fill="#1b75c9"/></svg></div><div class="mrow" style="top:261px"><div class="cb" style="left:9px"></div><div class="c st" style="left:45px">Đề nghị xuất hóa đơn</div><div class="c num" style="left:197px;width:135px;text-align:center">28/11/2025</div><div class="c num" style="left:332px;width:162px;text-align:center">26/09/2025 10:53:59</div><div class="c lnk num" style="left:504px">DN0000012</div><div class="c2 nm" style="left:639px">DHTHY - Đặng Thị<br>Hồng Thy</div><div class="c" style="left:774px">Nhóm Kinh doanh online</div><div class="c2" style="left:936px">Cửa hàng thời trang Minh<br>Tâm (demo)</div><div class="c act" style="left:1253px">Duyệt đề nghị</div><svg class="tri" style="left:1340px" width="8" height="5" viewBox="0 0 8 5"><path d="M0.3 0.5 H7.7 L4 4.6 Z" fill="#1b75c9"/></svg></div><div class="mrow" style="top:290px"><div class="cb" style="left:9px"></div><div class="c st" style="left:45px">Đề nghị xuất hóa đơn</div><div class="c num" style="left:197px;width:135px;text-align:center">28/11/2025</div><div class="c num" style="left:332px;width:162px;text-align:center">26/09/2025 10:53:59</div><div class="c lnk num" style="left:504px">DN0000011</div><div class="c2 nm" style="left:639px">DHTHY - Đặng Thị<br>Hồng Thy</div><div class="c" style="left:774px">Nhóm Kinh doanh online</div><div class="c2" style="left:936px">Cửa hàng thời trang Hồng<br>Anh (demo)</div><div class="c act" style="left:1253px">Duyệt đề nghị</div><svg class="tri" style="left:1340px" width="8" height="5" viewBox="0 0 8 5"><path d="M0.3 0.5 H7.7 L4 4.6 Z" fill="#1b75c9"/></svg></div><div class="mrow" style="top:319px"><div class="cb" style="left:9px"></div><div class="c st" style="left:45px">Đề nghị xuất hóa đơn</div><div class="c num" style="left:197px;width:135px;text-align:center">28/11/2025</div><div class="c num" style="left:332px;width:162px;text-align:center">26/09/2025 10:53:59</div><div class="c lnk num" style="left:504px">DN0000010</div><div class="c2 nm" style="left:639px">LBTUNG - Lương Bá<br>Tùng</div><div class="c" style="left:774px">Nhóm Kinh doanh online</div><div class="c2" style="left:936px">Cửa hàng thời trang<br>Quang Huy (demo)</div><div class="c act" style="left:1253px">Duyệt đề nghị</div><svg class="tri" style="left:1340px" width="8" height="5" viewBox="0 0 8 5"><path d="M0.3 0.5 H7.7 L4 4.6 Z" fill="#1b75c9"/></svg></div><div class="mrow" style="top:348px"><div class="cb" style="left:9px"></div><div class="c st" style="left:45px">Đề nghị xuất hóa đơn</div><div class="c num" style="left:197px;width:135px;text-align:center">28/11/2025</div><div class="c num" style="left:332px;width:162px;text-align:center">26/09/2025 10:53:59</div><div class="c lnk num" style="left:504px">DN0000009</div><div class="c2 nm" style="left:639px">LBTUNG - Lương Bá<br>Tùng</div><div class="c" style="left:774px">Nhóm Kinh doanh online</div><div class="c2" style="left:936px">Cửa hàng thời trang Kim<br>Phượng (demo)</div><div class="c act" style="left:1253px">Duyệt đề nghị</div><svg class="tri" style="left:1340px" width="8" height="5" viewBox="0 0 8 5"><path d="M0.3 0.5 H7.7 L4 4.6 Z" fill="#1b75c9"/></svg></div><div class="mrow" style="top:377px"><div class="cb" style="left:9px"></div><div class="c st" style="left:45px">Đề nghị xuất hóa đơn</div><div class="c num" style="left:197px;width:135px;text-align:center">28/11/2025</div><div class="c num" style="left:332px;width:162px;text-align:center">26/09/2025 10:53:59</div><div class="c lnk num" style="left:504px">DN0000008</div><div class="c2 nm" style="left:639px">DVLOI - Dương Văn<br>Lợi</div><div class="c" style="left:774px">Nhóm Kinh doanh online</div><div class="c2" style="left:936px">Cửa hàng thời trang Thanh<br>Hà (demo)</div><div class="c act" style="left:1253px">Duyệt đề nghị</div><svg class="tri" style="left:1340px" width="8" height="5" viewBox="0 0 8 5"><path d="M0.3 0.5 H7.7 L4 4.6 Z" fill="#1b75c9"/></svg></div></div>
<div class="abs" style="left:217px;top:581px;width:70px;height:23px;background:#f2eac4;border-radius:4px 4px 0 0;border-bottom:1.3px solid #0f9cb0;box-shadow:0 0 1px rgba(0,0,0,0.15)"></div>
<div class="abs" style="left:232.7px;top:583.98px;font-size:11.6px;font-weight:700;color:#1a1a1a;line-height:16px;white-space:nowrap;">Chi tiết</div>
<div class="abs" style="left:217px;top:607px;width:1375px;height:282px;background:#fff"></div>
<div class="abs" style="left:217px;top:607px;width:1375px;height:25px;background:#aadfe4;border-bottom:1px solid #0f9bae"></div>
<div class="abs" style="left:252px;top:607px;width:1px;height:24px;background:#8cc9d1"></div>
<div class="vdot" style="left:252px;top:632px;height:53px"></div>
<div class="abs" style="left:342px;top:607px;width:1px;height:24px;background:#8cc9d1"></div>
<div class="vdot" style="left:342px;top:632px;height:53px"></div>
<div class="abs" style="left:477px;top:607px;width:1px;height:24px;background:#8cc9d1"></div>
<div class="vdot" style="left:477px;top:632px;height:53px"></div>
<div class="abs" style="left:567px;top:607px;width:1px;height:24px;background:#8cc9d1"></div>
<div class="vdot" style="left:567px;top:632px;height:53px"></div>
<div class="abs" style="left:675px;top:607px;width:1px;height:24px;background:#8cc9d1"></div>
<div class="vdot" style="left:675px;top:632px;height:53px"></div>
<div class="abs" style="left:783px;top:607px;width:1px;height:24px;background:#8cc9d1"></div>
<div class="vdot" style="left:783px;top:632px;height:53px"></div>
<div class="abs" style="left:891px;top:607px;width:1px;height:24px;background:#8cc9d1"></div>
<div class="vdot" style="left:891px;top:632px;height:53px"></div>
<div class="abs" style="left:1017px;top:607px;width:1px;height:24px;background:#8cc9d1"></div>
<div class="vdot" style="left:1017px;top:632px;height:53px"></div>
<div class="abs" style="left:1197px;top:607px;width:1px;height:24px;background:#8cc9d1"></div>
<div class="vdot" style="left:1197px;top:632px;height:53px"></div>
<div class="abs" style="left:1332px;top:607px;width:1px;height:24px;background:#8cc9d1"></div>
<div class="vdot" style="left:1332px;top:632px;height:53px"></div>
<div class="abs" style="left:1467px;top:607px;width:1px;height:24px;background:#8cc9d1"></div>
<div class="vdot" style="left:1467px;top:632px;height:53px"></div>
<div class="abs" style="left:231px;top:610.69px;font-size:11px;font-weight:700;color:#1a1a1a;line-height:16px;white-space:nowrap;">#</div>
<div class="abs" style="left:262px;top:610.69px;font-size:11px;font-weight:700;color:#1a1a1a;line-height:16px;white-space:nowrap;">Mã hàng</div>
<div class="abs" style="left:352px;top:610.69px;font-size:11px;font-weight:700;color:#1a1a1a;line-height:16px;white-space:nowrap;">Tên hàng</div>
<div class="abs" style="left:487px;top:610.69px;font-size:11px;font-weight:700;color:#1a1a1a;line-height:16px;white-space:nowrap;">ĐVT</div>
<div class="abs" style="left:455px;width:200px;text-align:right;top:610.69px;font-size:11px;font-weight:700;color:#1a1a1a;line-height:16px;white-space:nowrap;">Số lượng</div>
<div class="abs" style="left:563.5px;width:200px;text-align:right;top:610.69px;font-size:11px;font-weight:700;color:#1a1a1a;line-height:16px;white-space:nowrap;">Đơn giá</div>
<div class="abs" style="left:671px;width:200px;text-align:right;top:610.69px;font-size:11px;font-weight:700;color:#1a1a1a;line-height:16px;white-space:nowrap;">Thành tiền</div>
<div class="abs" style="left:797px;width:200px;text-align:right;top:610.69px;font-size:11px;font-weight:700;color:#1a1a1a;line-height:16px;white-space:nowrap;">Tiền chiết khấu</div>
<div class="abs" style="left:977px;width:200px;text-align:right;top:610.69px;font-size:11px;font-weight:700;color:#1a1a1a;line-height:16px;white-space:nowrap;">Tiền thuế GTGT</div>
<div class="abs" style="left:1207px;top:610.69px;font-size:11px;font-weight:700;color:#1a1a1a;line-height:16px;white-space:nowrap;">Đơn đặt hàng</div>
<div class="abs" style="left:1342px;top:610.69px;font-size:11px;font-weight:700;color:#1a1a1a;line-height:16px;white-space:nowrap;">Hợp đồng bán</div>
<div class="abs" style="left:1477px;top:610.69px;font-size:11px;font-weight:700;color:#1a1a1a;line-height:16px;white-space:nowrap;">Biển kiểm soát</div>
<div class="abs" style="left:217px;top:658px;width:1375px;height:1px;background:#d2d2d2"></div>
<div class="abs" style="left:217px;top:685px;width:1375px;height:23px;background:#e9e9ed;border-top:2px solid #cfcfd3"></div>
<div class="abs" style="left:231px;top:636.84px;font-size:12px;font-weight:400;color:#262626;line-height:16px;white-space:nowrap;letter-spacing:0.45px">1</div>
<div class="abs" style="left:262px;top:636.84px;font-size:12px;font-weight:400;color:#262626;line-height:16px;white-space:nowrap;letter-spacing:0.45px">HH011</div>
<div class="abs" style="left:352px;top:636.84px;font-size:12px;font-weight:400;color:#262626;line-height:16px;white-space:nowrap;">Áo len nữ</div>
<div class="abs" style="left:487px;top:636.84px;font-size:12px;font-weight:400;color:#262626;line-height:16px;white-space:nowrap;">Cái</div>
<div class="abs" style="left:466px;width:200px;text-align:right;top:636.84px;font-size:12px;font-weight:400;color:#262626;line-height:16px;white-space:nowrap;letter-spacing:0.45px">60,00</div>
<div class="abs" style="left:574px;width:200px;text-align:right;top:636.84px;font-size:12px;font-weight:400;color:#262626;line-height:16px;white-space:nowrap;letter-spacing:0.45px">160.000,00</div>
<div class="abs" style="left:682px;width:200px;text-align:right;top:636.84px;font-size:12px;font-weight:400;color:#262626;line-height:16px;white-space:nowrap;letter-spacing:0.45px">9.600.000</div>
<div class="abs" style="left:808px;width:200px;text-align:right;top:636.84px;font-size:12px;font-weight:400;color:#262626;line-height:16px;white-space:nowrap;letter-spacing:0.45px">0</div>
<div class="abs" style="left:988px;width:200px;text-align:right;top:636.84px;font-size:12px;font-weight:400;color:#262626;line-height:16px;white-space:nowrap;letter-spacing:0.45px">768.000</div>
<div class="abs" style="left:1207px;top:636.84px;font-size:12px;font-weight:400;color:#262626;line-height:16px;white-space:nowrap;letter-spacing:0.45px">SDH202</div>
<div class="abs" style="left:231px;top:663.84px;font-size:12px;font-weight:400;color:#262626;line-height:16px;white-space:nowrap;letter-spacing:0.45px">2</div>
<div class="abs" style="left:262px;top:663.84px;font-size:12px;font-weight:400;color:#262626;line-height:16px;white-space:nowrap;letter-spacing:0.45px">HH012</div>
<div class="abs" style="left:352px;top:663.84px;font-size:12px;font-weight:400;color:#262626;line-height:16px;white-space:nowrap;">Bộ vest nam</div>
<div class="abs" style="left:487px;top:663.84px;font-size:12px;font-weight:400;color:#262626;line-height:16px;white-space:nowrap;">Bộ</div>
<div class="abs" style="left:466px;width:200px;text-align:right;top:663.84px;font-size:12px;font-weight:400;color:#262626;line-height:16px;white-space:nowrap;letter-spacing:0.45px">90,00</div>
<div class="abs" style="left:574px;width:200px;text-align:right;top:663.84px;font-size:12px;font-weight:400;color:#262626;line-height:16px;white-space:nowrap;letter-spacing:0.45px">46.000,00</div>
<div class="abs" style="left:682px;width:200px;text-align:right;top:663.84px;font-size:12px;font-weight:400;color:#262626;line-height:16px;white-space:nowrap;letter-spacing:0.45px">4.140.000</div>
<div class="abs" style="left:808px;width:200px;text-align:right;top:663.84px;font-size:12px;font-weight:400;color:#262626;line-height:16px;white-space:nowrap;letter-spacing:0.45px">0</div>
<div class="abs" style="left:988px;width:200px;text-align:right;top:663.84px;font-size:12px;font-weight:400;color:#262626;line-height:16px;white-space:nowrap;letter-spacing:0.45px">331.200</div>
<div class="abs" style="left:1207px;top:663.84px;font-size:12px;font-weight:400;color:#262626;line-height:16px;white-space:nowrap;letter-spacing:0.45px">SDH202</div>
<div class="abs" style="left:262px;top:689.19px;font-size:11px;font-weight:700;color:#1a1a1a;line-height:16px;white-space:nowrap;">Tổng</div>
<div class="abs" style="left:467px;width:200px;text-align:right;top:689.19px;font-size:11px;font-weight:700;color:#1a1a1a;line-height:16px;white-space:nowrap;letter-spacing:0.4px">150,00</div>
<div class="abs" style="left:683px;width:200px;text-align:right;top:689.19px;font-size:11px;font-weight:700;color:#1a1a1a;line-height:16px;white-space:nowrap;letter-spacing:0.4px">13.740.000</div>
<div class="abs" style="left:809px;width:200px;text-align:right;top:689.19px;font-size:11px;font-weight:700;color:#1a1a1a;line-height:16px;white-space:nowrap;letter-spacing:0.4px">0</div>
<div class="abs" style="left:989px;width:200px;text-align:right;top:689.19px;font-size:11px;font-weight:700;color:#1a1a1a;line-height:16px;white-space:nowrap;letter-spacing:0.4px">1.099.200</div>
<div class="abs" style="left:235.6px;top:718.84px;font-size:12px;font-weight:400;color:#333;line-height:16px;white-space:nowrap;">Tổng số: <b>2</b> bản ghi</div>
<div class="abs" style="left:1291px;top:716px;width:180px;height:22px;border:1px solid #c6c8ca;border-radius:2px"></div>
<div class="abs" style="left:1301px;top:719.24px;font-size:12.3px;font-weight:400;color:#262626;line-height:16px;white-space:nowrap;">20 bản ghi trên 1 trang</div>
<svg class="abs" style="left:1455px;top:724px" width="8" height="5" viewBox="0 0 8 5"><path d="M0.3 0.3 H7.7 L4 4.7 Z" fill="#333"/></svg>
<div class="abs" style="left:1485px;top:719.34px;font-size:12px;font-weight:400;color:#a9a9a9;line-height:16px;white-space:nowrap;">Trước</div>
<div class="abs" style="left:1528px;top:719px;width:20px;height:16px;border:1px solid #d4d4d4;background:#fff"></div>
<div class="abs" style="left:1534.5px;top:719.34px;font-size:12px;font-weight:700;color:#222;line-height:16px;white-space:nowrap;">1</div>
<div class="abs" style="left:1561px;top:719.34px;font-size:12px;font-weight:400;color:#a9a9a9;line-height:16px;white-space:nowrap;">Sau</div>
<div class="abs" style="left:217px;top:888px;width:1375px;height:7px;background:#efefef"></div>
<div class="abs" style="left:217px;top:888px;width:886px;height:7px;background:#b9bcc2;border-radius:4px"></div>

<div class="abs" style="left:8px;top:400px;width:177px;height:38px;border:3px solid #e34848;z-index:50"></div>
<div class="abs" style="left:166px;top:375px;width:40px;height:40px;border-radius:20px;background:#e24848;box-shadow:0 1px 2px rgba(0,0,0,0.3);z-index:51"><svg width="40" height="40" viewBox="0 0 40 40"><path d="M20.4 8.2 H22.8 V30.3 H20.3 V12.4 L15.2 16.2 L14.1 14.1 Z" fill="#fff"/></svg></div>
<div class="abs" style="left:1171px;top:46px;width:168px;height:42px;border:3px solid #e34848;z-index:50"></div>
<div class="abs" style="left:1152px;top:22px;width:40px;height:40px;border-radius:20px;background:#e24848;box-shadow:0 1px 2px rgba(0,0,0,0.3);z-index:51"><svg width="40" height="40" viewBox="0 0 40 40"><path d="M13.4 15.6 C13.4 11.3 16.3 9.3 19.7 9.3 C23.2 9.3 25.6 11.5 25.6 14.9 C25.6 17.3 24.4 18.9 22.7 20.7 L13.6 28.9 H26.9" fill="none" stroke="#fff" stroke-width="2.5"/></svg></div>

<div id="frame"></div>

</body></html>
